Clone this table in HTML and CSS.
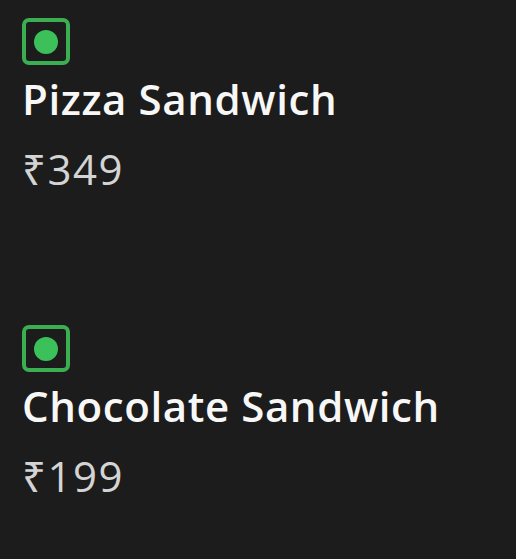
FILE: index.html
```html
<!DOCTYPE html>
<html>
<head>
<meta charset="utf-8">
<link rel="stylesheet" href="styles.css">
</head>
<body>
<div class="list">
  <div class="item">
    <span class="veg"><span class="dot"></span></span>
    <div class="name">Pizza Sandwich</div>
    <div class="price">₹349</div>
  </div>
  <div class="item">
    <span class="veg"><span class="dot"></span></span>
    <div class="name">Chocolate Sandwich</div>
    <div class="price">₹199</div>
  </div>
</div>
</body>
</html>
```
FILE: styles.css
```css
html, body {
  margin: 0;
  padding: 0;
  background: #1c1c1c;
  height: 100%;
}
body {
  font-family: "Open Sans", sans-serif;
  overflow: hidden;
}
.list {
  display: flex;
  flex-direction: column;
  gap: 132px;
  padding: 18px 22px 0;
}
.item {
  display: flex;
  flex-direction: column;
  align-items: flex-start;
}
.veg {
  box-sizing: border-box;
  width: 48px;
  height: 47px;
  border: 4px solid #3cae52;
  border-radius: 7px;
  display: flex;
  align-items: center;
  justify-content: center;
}
.dot {
  width: 24px;
  height: 24px;
  border-radius: 50%;
  background: #3cc15a;
}
.name {
  margin-top: 10px;
  font-size: 42px;
  font-weight: 600;
  letter-spacing: 0.6px;
  color: #f7f7f7;
  line-height: 48px;
}
.price {
  margin-top: 22px;
  font-size: 42px;
  font-weight: 400;
  letter-spacing: 1.5px;
  color: #d4d4d4;
  line-height: 48px;
}
```
